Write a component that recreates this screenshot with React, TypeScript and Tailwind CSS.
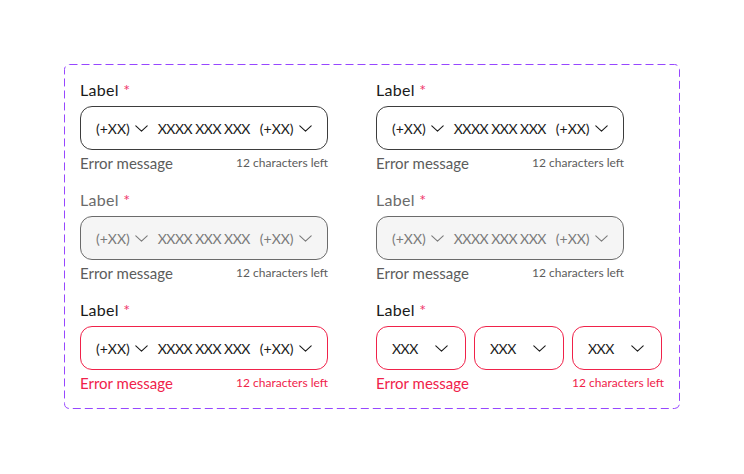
import React from 'react';

type Variant = 'default' | 'disabled' | 'error';

function Chevron({ className = '' }: { className?: string }) {
  return (
    <svg width="13" height="7" viewBox="0 0 13 7" fill="none" className={`shrink-0 ${className}`}>
      <path d="M0.8 0.8l5.7 5.4 5.7-5.4" stroke="currentColor" strokeWidth="1.1" strokeLinecap="round" strokeLinejoin="round" />
    </svg>
  );
}

const boxStyles: Record<Variant, string> = {
  default: 'border-[#3d3d3d] bg-white text-[#1a1a1a]',
  disabled: 'border-[#6b6b6b] bg-[#f5f5f5] text-[#7a7a7a]',
  error: 'border-[#f0224a] bg-white text-[#1a1a1a]',
};

const labelStyles: Record<Variant, string> = {
  default: 'text-[#1a1a1a]',
  disabled: 'text-[#6b6b6b]',
  error: 'text-[#1a1a1a]',
};

const helperStyles: Record<Variant, string> = {
  default: 'text-[#5c5c5c]',
  disabled: 'text-[#5c5c5c]',
  error: 'text-[#f0224a]',
};

function FieldLabel({ variant }: { variant: Variant }) {
  return (
    <div className={`h-[18px] whitespace-nowrap text-[16px] leading-[16px] tracking-[0.3px] ${labelStyles[variant]}`}>
      Label <span className="text-[#f0386b]">*</span>
    </div>
  );
}

function Helper({ variant }: { variant: Variant }) {
  return (
    <div className={`mt-[3px] flex h-5 items-center justify-between whitespace-nowrap ${helperStyles[variant]}`}>
      <span className="text-[15px]">Error message</span>
      <span className="text-[12px]">12 characters left</span>
    </div>
  );
}

function PhoneField({ variant }: { variant: Variant }) {
  return (
    <div className="flex w-[248px] flex-col">
      <FieldLabel variant={variant} />
      <div className={`mt-1.5 flex h-11 items-center whitespace-nowrap rounded-xl border pl-[15px] pr-4 text-[14px] ${boxStyles[variant]}`}>
        <span>(+XX)</span>
        <Chevron className="ml-[5px]" />
        <span className="ml-[10px] tracking-[-0.5px]">XXXX XXX XXX</span>
        <span className="ml-[10px]">(+XX)</span>
        <Chevron className="ml-[5px]" />
      </div>
      <Helper variant={variant} />
    </div>
  );
}

function SplitField() {
  return (
    <div className="flex w-[288px] flex-col">
      <FieldLabel variant="error" />
      <div className="mt-1.5 flex gap-2">
        {[0, 1, 2].map((i) => (
          <div
            key={i}
            className="flex h-11 w-[90px] items-center justify-between rounded-xl border border-[#f0224a] bg-white pl-[15px] pr-[17px] text-[14px] text-[#1a1a1a]"
          >
            <span className="tracking-[-0.5px]">XXX</span>
            <Chevron />
          </div>
        ))}
      </div>
      <Helper variant="error" />
    </div>
  );
}

export default function App() {
  return (
    <div className="h-[474px] w-[744px] bg-white pl-16 pt-16" style={{ fontFamily: 'Lato, "Noto Sans", sans-serif' }}>
      <div className="relative flex w-[616px] flex-col gap-[19px] pb-[15px] pl-4 pr-4 pt-[18px]">
        {/* dashed frame */}
        <svg className="pointer-events-none absolute inset-0" width="616" height="345" fill="none">
          <rect x="0.5" y="0.5" width="615" height="344" rx="5" stroke="#9747ff" strokeDasharray="8 4" />
        </svg>
        <div className="flex gap-12">
          <PhoneField variant="default" />
          <PhoneField variant="default" />
        </div>
        <div className="flex gap-12">
          <PhoneField variant="disabled" />
          <PhoneField variant="disabled" />
        </div>
        <div className="flex gap-12">
          <PhoneField variant="error" />
          <SplitField />
        </div>
      </div>
    </div>
  );
}
